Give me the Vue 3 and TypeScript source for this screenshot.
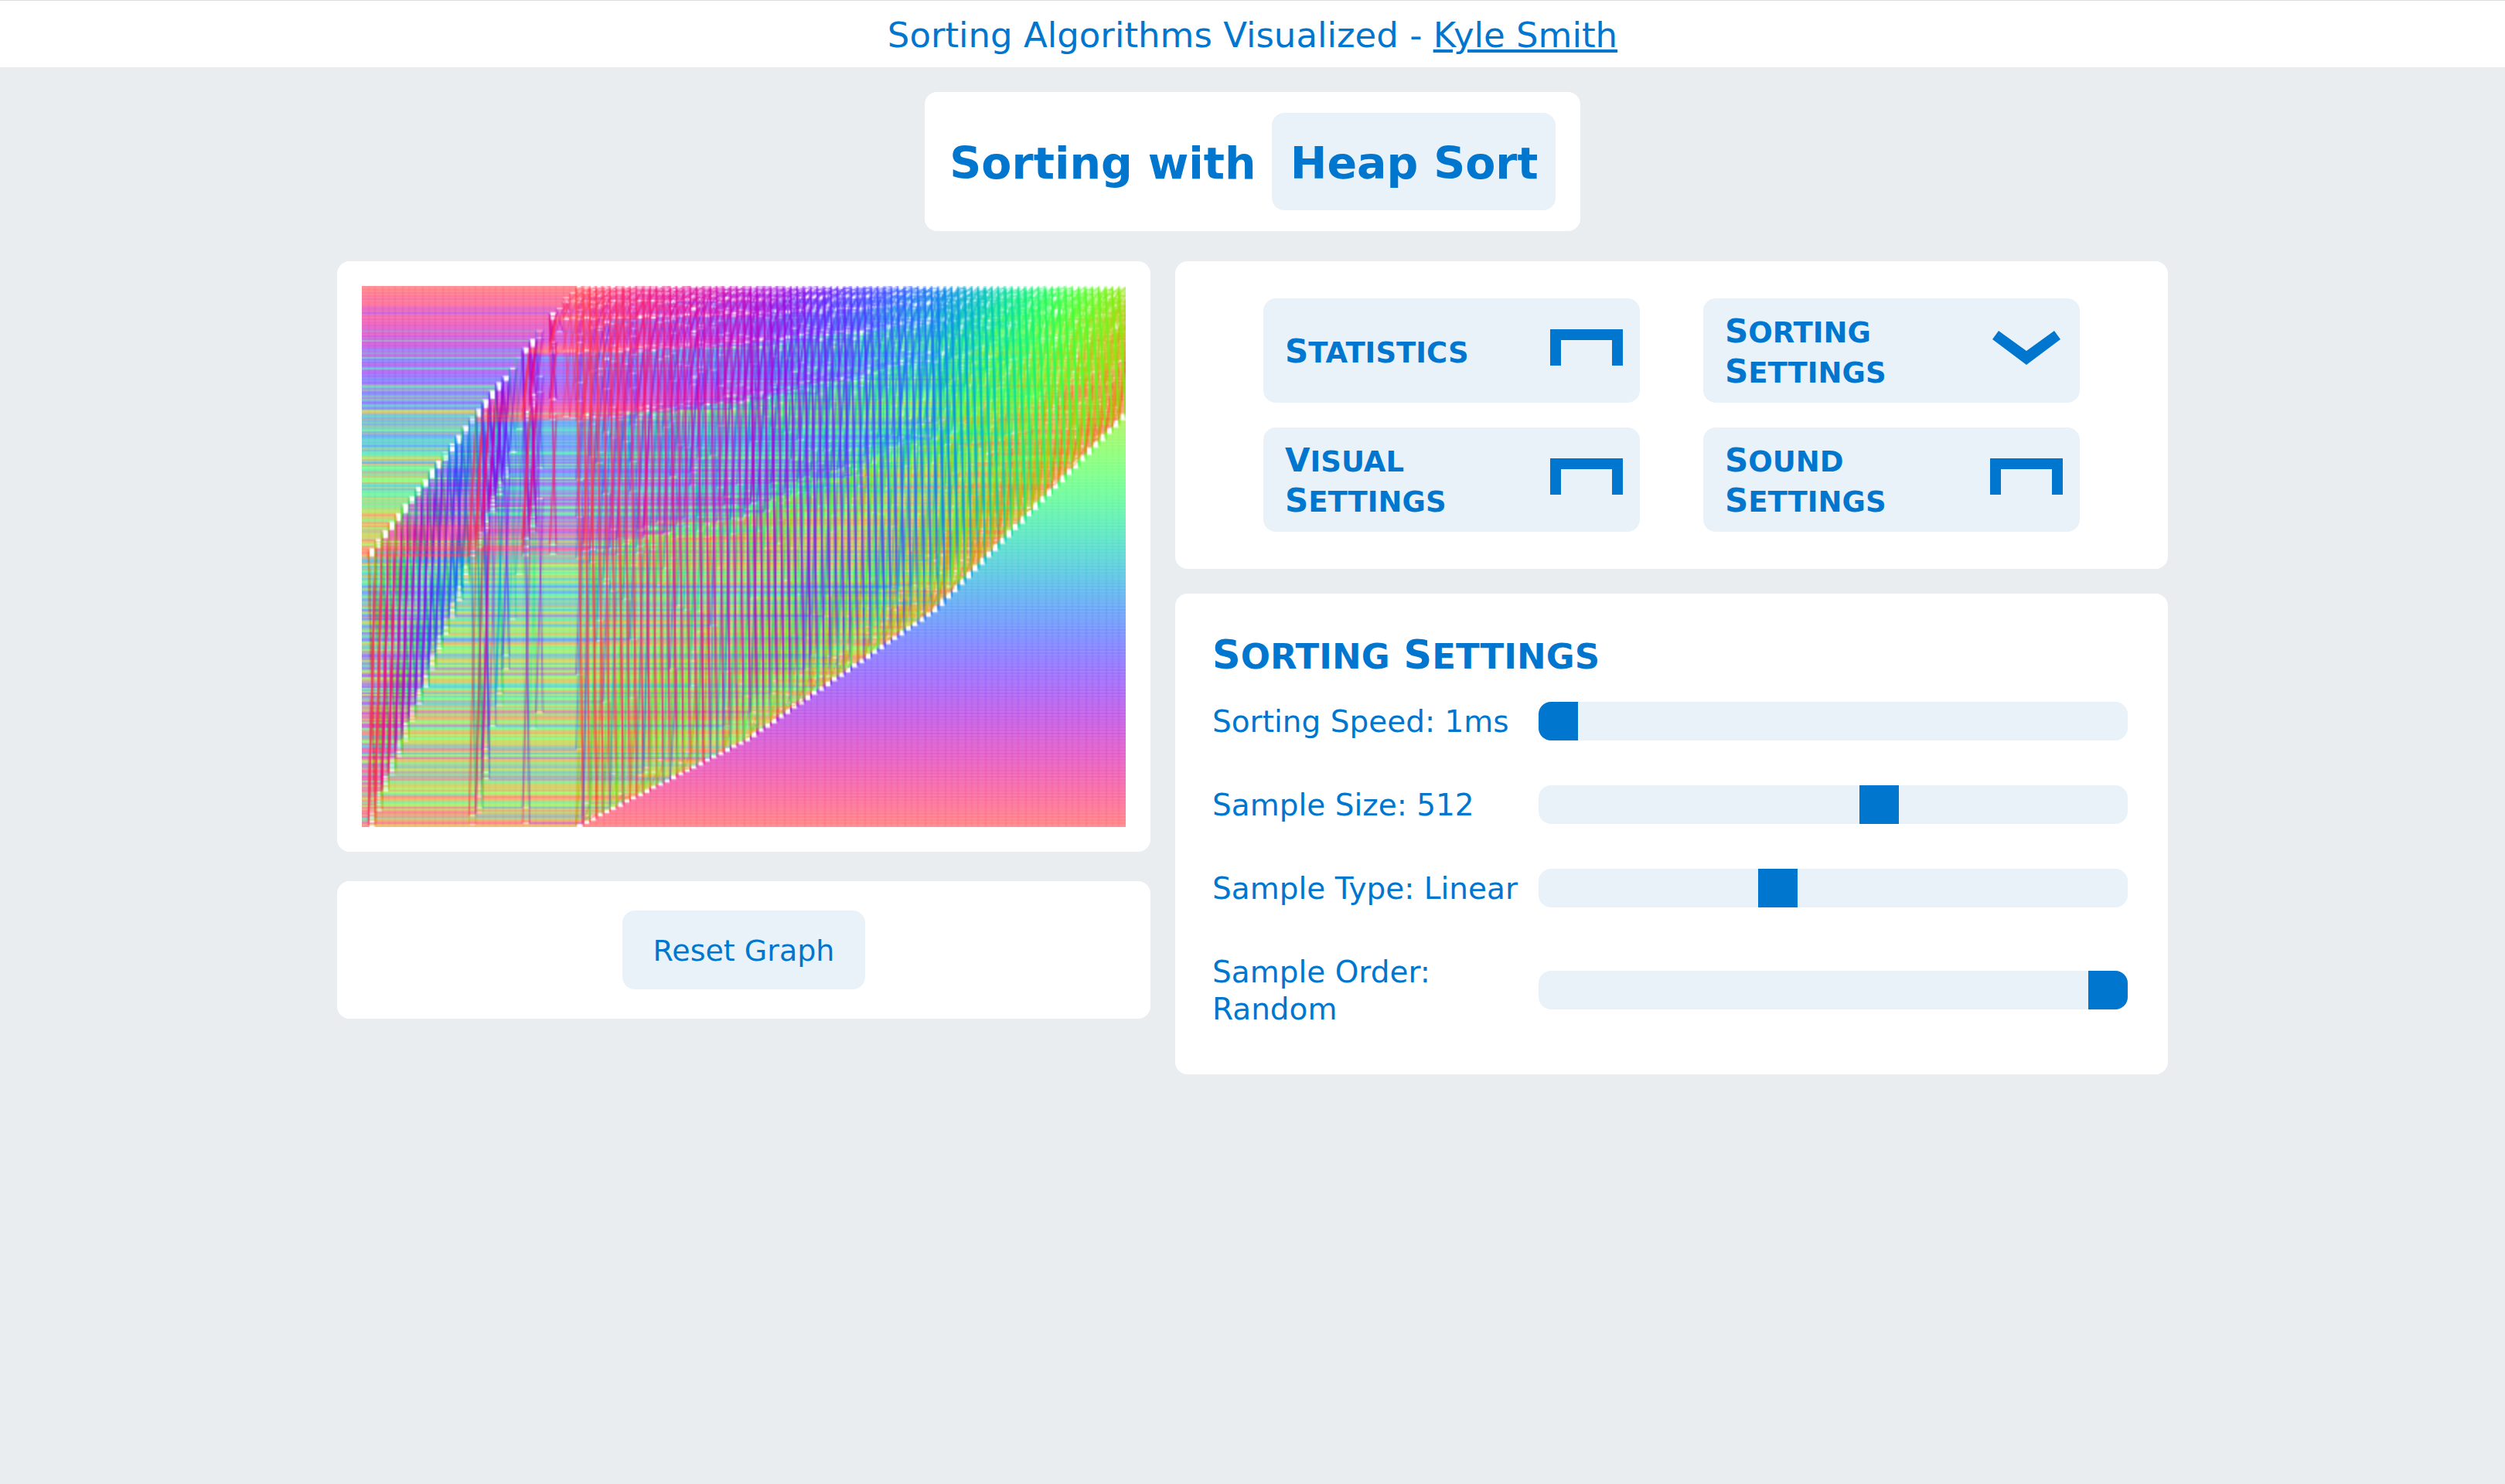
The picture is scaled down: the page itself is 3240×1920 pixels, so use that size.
<script setup lang="ts">
import { computed, onMounted, ref } from 'vue'

interface Panel {
  name: string
  open: boolean
}

const algorithms = ['Heap Sort', 'Quick Sort', 'Merge Sort', 'Shell Sort']
const algorithm = ref('Heap Sort')

const panels = ref<Panel[]>([
  { name: 'Statistics', open: false },
  { name: 'Sorting Settings', open: true },
  { name: 'Visual Settings', open: false },
  { name: 'Sound Settings', open: false },
])

const types = ['Constant', 'Square', 'Linear', 'Sine', 'Cubic', 'Steps']
const orders = ['Sorted', 'Reversed', 'Random']

const speed = ref(1)
const sizePower = ref(9)
const typeIndex = ref(2)
const orderIndex = ref(2)

const sampleSize = computed(() => 2 ** sizePower.value)
const sampleType = computed(() => types[typeIndex.value])
const sampleOrder = computed(() => orders[orderIndex.value])

const graph = ref<HTMLCanvasElement | null>(null)

const COUNT = 512
const COLUMNS = 114

function randomSource(seed: number): () => number {
  let s = seed
  return () => {
    s = (s * 1664525 + 1013904223) >>> 0
    return s / 4294967296
  }
}

/* Starting order: large values near both ends, small ones in the middle. */
function startOrder(): number[] {
  const random = randomSource(20240)
  const keys = Array.from({ length: COUNT }, (_, i) => {
    const t = i / COUNT
    let key: number
    if (t < 0.5) {
      key = 1 - 1.7 * t + 0.5 * t * t - random() * t * 0.7
      if (random() < 0.36) key -= random() * Math.min(0.5, t * 5)
    } else {
      const rise = (t - 0.5) * 2
      key = random() < 0.32 + rise * rise * 0.3
        ? 0.4 + rise * 0.52 + random() * 0.1
        : 0.04 + random() * 0.42
    }
    return { i, key }
  })
  keys.sort((a, b) => a.key - b.key)
  const out = new Array<number>(COUNT)
  keys.forEach((k, rank) => {
    out[k.i] = rank
  })
  return out
}

function siftDown(a: number[], start: number, end: number) {
  let root = start
  while (root * 2 + 1 < end) {
    let child = root * 2 + 1
    if (child + 1 < end && a[child + 1] > a[child]) child++
    if (a[root] >= a[child]) return
    const t = a[root]
    a[root] = a[child]
    a[child] = t
    root = child
  }
}

/* How many elements have been taken off the heap at a given column. */
function extractedAt(column: number): number {
  const marks = [[32, 0], [57, 81], [85, 203], [114, 391]]
  for (let i = 1; i < marks.length; i++) {
    const [c0, n0] = marks[i - 1]
    const [c1, n1] = marks[i]
    if (column <= c1) return Math.max(0, Math.round(n0 + ((column - c0) / (c1 - c0)) * (n1 - n0)))
  }
  return 391
}

function snapshots(): number[][] {
  const a = startOrder()
  const frames: number[][] = [a.slice()]
  let next = COUNT / 2 - 1
  let end = COUNT
  for (let c = 1; c <= COLUMNS; c++) {
    const target = c >= 32 ? -1 : Math.round(255 - ((c - 1) / 31) * 256)
    while (next > target && next >= 0) siftDown(a, next--, COUNT)
    if (c > 32) {
      const goal = COUNT - extractedAt(c)
      while (end > goal) {
        end--
        const t = a[0]
        a[0] = a[end]
        a[end] = t
        siftDown(a, 0, end)
      }
    }
    frames.push(a.slice())
  }
  return frames
}

function rainbow(value: number): string {
  const angle = (value / COUNT) * Math.PI * 2
  const channel = (shift: number) => Math.round(128 + 127 * Math.cos(angle - shift))
  return `rgb(${channel(0)}, ${channel((Math.PI * 2) / 3)}, ${channel((Math.PI * 4) / 3)})`
}

function positions(frame: number[]): number[] {
  const out = new Array<number>(COUNT)
  frame.forEach((value, index) => {
    out[value] = index
  })
  return out
}

onMounted(() => {
  const canvas = graph.value
  const ctx = canvas?.getContext('2d')
  if (!canvas || !ctx) return
  const step = 13 / 3
  const row = canvas.height / COUNT
  ctx.fillStyle = '#fff'
  ctx.fillRect(0, 0, canvas.width, canvas.height)
  ctx.lineWidth = 0.5
  const frames = snapshots().map(positions)
  for (let c = 0; c < COLUMNS; c++) {
    const from = frames[c]
    const to = frames[c + 1]
    for (let i = 0; i < COUNT; i++) {
      ctx.strokeStyle = rainbow(i)
      ctx.beginPath()
      ctx.moveTo(c * step, (from[i] + 0.5) * row)
      ctx.lineTo((c + 1) * step + 0.2, (to[i] + 0.5) * row)
      ctx.stroke()
    }
  }
})
</script>

<template>
  <div class="page">
    <header class="top">
      <span>Sorting Algorithms Visualized - <a href="#">Kyle Smith</a></span>
    </header>

    <main>
      <h1 class="card title">
        <label for="algorithm">Sorting with</label>
        <select id="algorithm" v-model="algorithm">
          <option v-for="a in algorithms" :key="a">{{ a }}</option>
        </select>
      </h1>

      <div class="columns">
        <section class="column left">
          <div class="card graph">
            <canvas ref="graph" width="494" height="350"></canvas>
          </div>
          <div class="card actions">
            <button type="button" class="reset">Reset Graph</button>
          </div>
        </section>

        <section class="column right">
          <nav class="card tabs">
            <button
              v-for="p in panels"
              :key="p.name"
              type="button"
              class="tab"
              @click="p.open = !p.open"
            >
              <span class="caps">
                <template v-for="w in p.name.split(' ')" :key="w"><span class="word">{{ w }}</span>{{ ' ' }}</template>
              </span>
              <svg viewBox="0 0 94 47" width="94" height="47" aria-hidden="true">
                <path v-if="p.open" d="M11 2 47 28 83 2l8 11-44 33L3 13z" />
                <path v-else d="M0 0h94v47H80V14H14v33H0z" />
              </svg>
            </button>
          </nav>

          <div class="card settings">
            <h2 class="caps"><span class="word">Sorting</span> <span class="word">Settings</span></h2>
            <div class="row">
              <label for="speed">Sorting Speed: {{ speed }}ms</label>
              <input id="speed" v-model.number="speed" type="range" min="1" max="100" />
            </div>
            <div class="row">
              <label for="size">Sample Size: {{ sampleSize }}</label>
              <input id="size" v-model.number="sizePower" type="range" min="2" max="14" />
            </div>
            <div class="row">
              <label for="type">Sample Type: {{ sampleType }}</label>
              <input id="type" v-model.number="typeIndex" type="range" min="0" max="5" />
            </div>
            <div class="row">
              <label for="order">Sample Order: {{ sampleOrder }}</label>
              <input id="order" v-model.number="orderIndex" type="range" min="0" max="2" />
            </div>
          </div>
        </section>
      </div>
    </main>
  </div>
</template>

<style>
body {
  margin: 0;
  background: #e9edf0;
}
</style>

<style scoped>
.page {
  min-height: 100vh;
  background: #e9edf0;
  color: #0076ce;
  font-family: Verdana, 'DejaVu Sans', sans-serif;
  font-size: 39px;
  line-height: 48px;
}

.page,
.page * {
  box-sizing: border-box;
}

button,
select {
  border: 0;
  border-radius: 16px;
  background: #eaf2f9;
  color: inherit;
  font: inherit;
  cursor: pointer;
}

.top {
  display: flex;
  justify-content: center;
  padding: 18px 0 14px;
  border-top: 1px solid #dadce0;
  background: #fff;
  font-size: 45px;
  line-height: 54px;
}

.top a {
  color: inherit;
}

main {
  max-width: 2368px;
  margin: 0 auto;
  padding: 32px 0;
}

.card {
  border-radius: 16px;
  background: #fff;
}

.title {
  display: flex;
  align-items: center;
  gap: 20px;
  width: fit-content;
  margin: 0 auto 39px;
  padding: 27px 32px;
  font-size: 57px;
  line-height: 70px;
}

.title label {
  padding-top: 4px;
}

.title select {
  width: 367px;
  height: 126px;
  padding: 4px 24px 0;
  appearance: none;
}

.columns {
  display: grid;
  grid-template-columns: 1052fr 1284fr;
  gap: 32px;
  align-items: start;
}

.column {
  display: flex;
  flex-direction: column;
}

.left {
  gap: 38px;
}

.right {
  gap: 32px;
}

.graph {
  padding: 32px;
}

.graph canvas {
  display: block;
  width: 100%;
}

.actions {
  display: flex;
  justify-content: center;
  padding: 38px;
}

.reset {
  padding: 28px 40px 26px;
  font-size: 38px;
}

.tabs {
  display: grid;
  grid-template-columns: 1fr 1fr;
  gap: 32px 82px;
  padding: 48px 114px;
}

.tab {
  display: flex;
  align-items: center;
  justify-content: space-between;
  height: 135px;
  padding: 0 22px 0 28px;
  text-align: left;
  font-size: 42px;
  line-height: 50px;
}

.tab .caps {
  width: 260px;
  padding-top: 4px;
}

.tab svg {
  flex: none;
  margin-bottom: 8px;
  fill: currentColor;
}

.caps {
  font-weight: bold;
}

.word {
  display: inline-block;
  text-transform: uppercase;
  font-size: 37px;
}

.word::first-letter {
  font-size: 42px;
}

.settings {
  padding: 48px 52px 60px 48px;
}

.settings h2 {
  margin: 0 0 26px;
  font-size: 51px;
  line-height: 64px;
}

.settings .word {
  font-size: 45px;
}

.settings .word::first-letter {
  font-size: 51px;
}

.row {
  display: grid;
  grid-template-columns: 400px 1fr;
  gap: 22px;
  align-items: center;
}

.row label {
  padding-top: 2px;
}

.row + .row {
  margin-top: 58px;
}

input[type='range'] {
  width: 100%;
  height: 50px;
  margin: 0;
  border-radius: 16px;
  background: #eaf2f9;
  overflow: hidden;
  appearance: none;
}

input[type='range']::-webkit-slider-thumb {
  width: 51px;
  height: 50px;
  border: 0;
  border-radius: 0;
  background: #0076ce;
  appearance: none;
}
</style>
